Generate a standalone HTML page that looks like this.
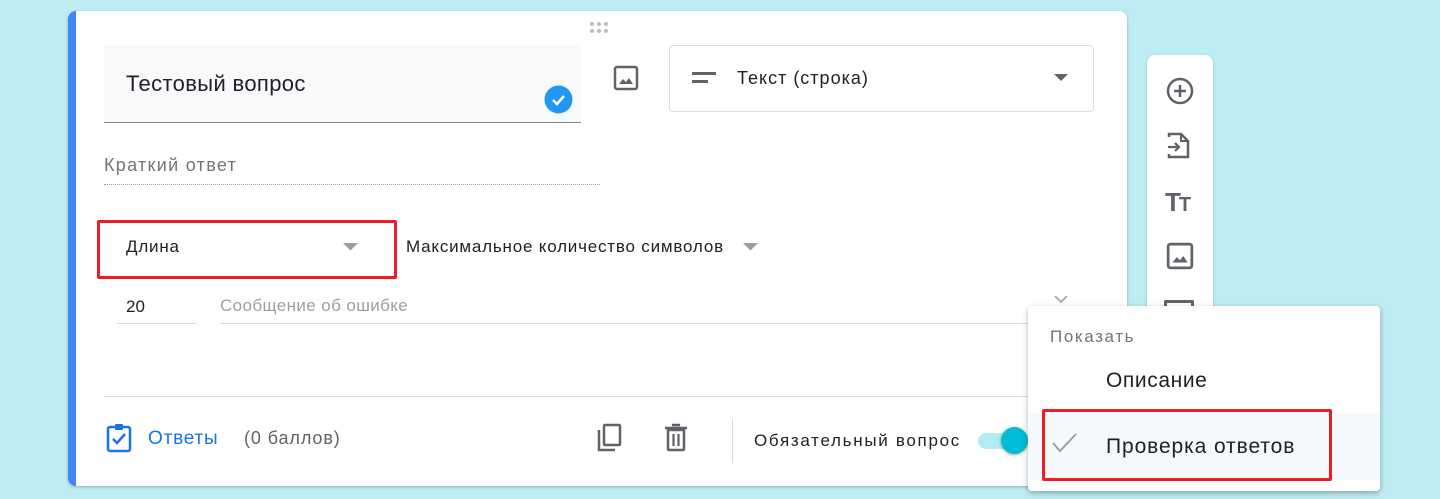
<!DOCTYPE html>
<html><head><meta charset="utf-8"><style>
*{margin:0;padding:0;box-sizing:border-box}
body{width:1440px;height:499px;background:#bdedf2;position:relative;overflow:hidden;font-family:"Liberation Sans","Noto Sans CJK SC",sans-serif}
.a{position:absolute}
.card{left:68px;top:11px;width:1059px;height:475px;background:#fff;border-radius:8px;box-shadow:0 1px 3px rgba(0,0,0,.25);overflow:hidden}
.card .bar{left:0;top:0;width:8px;height:100%;background:#4285f4}
.t{white-space:nowrap}
</style></head><body>
<div class="a card"><div class="a bar"></div></div>

<svg class="a" style="left:589px;top:21px" width="22" height="12"><g fill="#bdbdbd"><circle cx="3" cy="3" r="2"/><circle cx="10" cy="3" r="2"/><circle cx="17" cy="3" r="2"/><circle cx="3" cy="10" r="2"/><circle cx="10" cy="10" r="2"/><circle cx="17" cy="10" r="2"/></g></svg>

<div class="a" style="left:104px;top:45px;width:477px;height:78px;background:#f8f9fa;border-bottom:1px solid #80868b"></div>
<div class="a t" style="left:126px;top:71px;font-size:22px;letter-spacing:0.35px;color:#202124">Тестовый вопрос</div>
<svg class="a" style="left:544px;top:85px" width="29" height="29"><circle cx="14.5" cy="14.5" r="14" fill="#2196f3"/><path d="M9 15l4 4 7-8" stroke="#fff" stroke-width="2.5" fill="none"/></svg>

<svg class="a" style="left:613px;top:65px" width="26" height="26" viewBox="0 0 26 26"><rect x="2" y="2" width="22" height="22" rx="2" fill="none" stroke="#5f6368" stroke-width="2.5"/><path d="M6 19l4-5 3 3 3-4 4 6z" fill="#5f6368"/></svg>

<div class="a" style="left:669px;top:45px;width:425px;height:67px;border:1px solid #dadce0;border-radius:4px"></div>
<div class="a" style="left:692px;top:72px;width:24px;height:3px;background:#5f6368"></div>
<div class="a" style="left:692px;top:80px;width:16px;height:3px;background:#5f6368"></div>
<div class="a t" style="left:737px;top:68px;font-size:18px;letter-spacing:1px;color:#202124">Текст (строка)</div>
<svg class="a" style="left:1054px;top:74px" width="14" height="8"><path d="M0 0h14L7 7z" fill="#5f6368"/></svg>

<div class="a t" style="left:104px;top:155px;font-size:18px;letter-spacing:1.3px;color:#70757a">Краткий ответ</div>
<div class="a" style="left:104px;top:184px;width:496px;border-top:1px dotted #9aa0a6"></div>

<div class="a" style="left:97px;top:220px;width:300px;height:59px;border:3px solid #ee1c24;border-radius:2px"></div>
<div class="a t" style="left:126px;top:237px;font-size:17px;letter-spacing:0.8px;color:#202124">Длина</div>
<svg class="a" style="left:343px;top:243px" width="15" height="8"><path d="M0 0h15L7.5 7.5z" fill="#9e9e9e"/></svg>
<div class="a t" style="left:406px;top:237px;font-size:17px;letter-spacing:0.8px;color:#202124">Максимальное количество символов</div>
<svg class="a" style="left:743px;top:243px" width="15" height="8"><path d="M0 0h15L7.5 7.5z" fill="#9e9e9e"/></svg>

<div class="a t" style="left:126px;top:297px;font-size:17px;color:#202124">20</div>
<div class="a" style="left:117px;top:323px;width:80px;border-top:1px solid #dadce0"></div>
<div class="a t" style="left:220px;top:296px;font-size:17px;letter-spacing:0.4px;color:#9aa0a6">Сообщение об ошибке</div>
<div class="a" style="left:220px;top:323px;width:810px;border-top:1px solid #dadce0"></div>
<svg class="a" style="left:1053px;top:296px" width="16" height="12"><path d="M2 0l6 6 6-6" stroke="#9aa0a6" stroke-width="1.6" fill="none"/></svg>

<div class="a" style="left:104px;top:396px;width:1023px;border-top:1px solid #dadce0"></div>

<svg class="a" style="left:106px;top:423px" width="28" height="30" viewBox="0 0 28 30"><rect x="2" y="4" width="22" height="24" rx="2" fill="none" stroke="#1a73e8" stroke-width="2.5"/><rect x="9" y="1" width="8" height="6" rx="1" fill="#1a73e8"/><path d="M7 16l4 4 8-9" stroke="#1a73e8" stroke-width="2.5" fill="none"/></svg>
<div class="a t" style="left:148px;top:428px;font-size:19px;letter-spacing:0.8px;color:#1a73e8">Ответы</div>
<div class="a t" style="left:244px;top:428px;font-size:18px;letter-spacing:0.9px;color:#5f6368">(0 баллов)</div>
<svg class="a" style="left:596px;top:423px" width="28" height="30" viewBox="0 0 28 30"><rect x="8" y="2" width="16" height="20" rx="1" fill="none" stroke="#5f6368" stroke-width="2.5"/><path d="M3 7v20h16" stroke="#5f6368" stroke-width="2.5" fill="none"/></svg>
<svg class="a" style="left:663px;top:423px" width="26" height="30" viewBox="0 0 26 30"><path d="M2 5h22M9 2h8" stroke="#5f6368" stroke-width="2.5"/><path d="M5 7h16v19a1 1 0 0 1-1 1H6a1 1 0 0 1-1-1z" fill="none" stroke="#5f6368" stroke-width="2.5"/><path d="M10.5 11v12M15.5 11v12" stroke="#5f6368" stroke-width="2.2"/></svg>
<div class="a" style="left:732px;top:419px;height:44px;border-left:1px solid #dadce0"></div>
<div class="a t" style="left:754px;top:431px;font-size:17px;letter-spacing:1.7px;color:#202124">Обязательный вопрос</div>
<div class="a" style="left:978px;top:433px;width:40px;height:16px;border-radius:8px;background:#b2ebf2"></div>
<div class="a" style="left:1001px;top:427px;width:27px;height:27px;border-radius:50%;background:#00bcd4;box-shadow:0 1px 3px rgba(0,0,0,.35)"></div>

<div class="a" style="left:1147px;top:55px;width:66px;height:270px;background:#fff;border-radius:8px;box-shadow:0 1px 3px rgba(0,0,0,.2)"></div>
<svg class="a" style="left:1166px;top:77px" width="28" height="28" viewBox="0 0 28 28"><circle cx="14" cy="14" r="12" fill="none" stroke="#5f6368" stroke-width="2.5"/><path d="M14 8v12M8 14h12" stroke="#5f6368" stroke-width="2.5"/></svg>
<svg class="a" style="left:1166px;top:131px" width="28" height="30" viewBox="0 0 28 30"><path d="M3 6V3h12l7 7v16H3v-3" fill="none" stroke="#5f6368" stroke-width="2.5"/><path d="M15 3v7h7" fill="none" stroke="#5f6368" stroke-width="2"/><path d="M2 16h11M9 12l4 4-4 4" fill="none" stroke="#5f6368" stroke-width="2.2"/></svg>
<div class="a t" style="left:1165px;top:187px;font-size:26px;font-weight:bold;color:#5f6368;letter-spacing:-2px">T<span style="font-size:20px">T</span></div>
<svg class="a" style="left:1166px;top:242px" width="28" height="28" viewBox="0 0 26 26"><rect x="2" y="2" width="22" height="22" rx="2" fill="none" stroke="#5f6368" stroke-width="2.5"/><path d="M6 19l4-5 3 3 3-4 4 6z" fill="#5f6368"/></svg>
<div class="a" style="left:1164px;top:300px;width:30px;height:10px;border:3px solid #5f6368;border-bottom:none;border-radius:2px 2px 0 0"></div>

<div class="a" style="left:1028px;top:306px;width:352px;height:185px;background:#fff;border-radius:4px;box-shadow:0 2px 6px rgba(0,0,0,.3)"></div>
<div class="a t" style="left:1050px;top:327px;font-size:17px;letter-spacing:1.6px;color:#70757a">Показать</div>
<div class="a t" style="left:1106px;top:369px;font-size:21px;letter-spacing:0.6px;color:#202124">Описание</div>
<div class="a" style="left:1028px;top:413px;width:352px;height:67px;background:#f5f8fd"></div>
<div class="a" style="left:1042px;top:409px;width:290px;height:72px;border:3px solid #ee1c24;border-radius:2px"></div>
<svg class="a" style="left:1052px;top:433px" width="26" height="20"><path d="M1 10l7 8L24 1" stroke="#9aa0a6" stroke-width="2" fill="none"/></svg>
<div class="a t" style="left:1106px;top:435px;font-size:21px;letter-spacing:0.9px;color:#202124">Проверка ответов</div>
</body></html>
